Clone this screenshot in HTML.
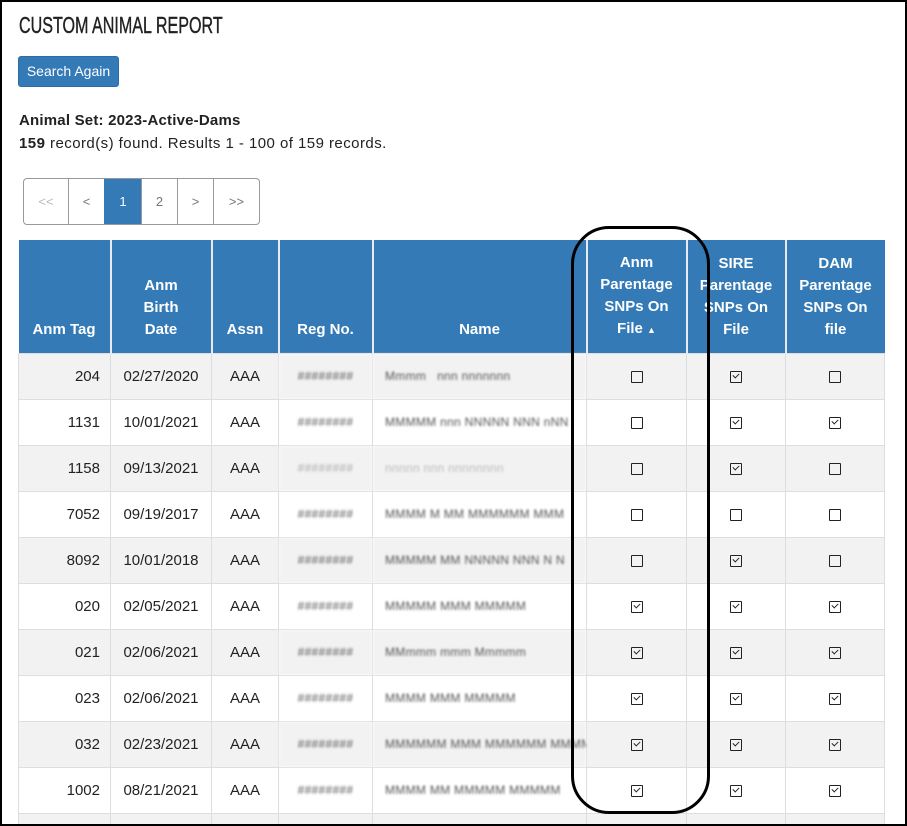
<!DOCTYPE html>
<html style="overflow:hidden"><head><style>
html,body{margin:0;width:907px;height:826px;overflow:hidden;}
body{position:relative;background:#fff;font-family:"Liberation Sans","DejaVu Sans",sans-serif;color:#222;}
.frame{position:absolute;left:0;top:0;width:903px;height:822px;border:2px solid #000;z-index:5;pointer-events:none}
h1{position:absolute;left:19px;top:12px;margin:0;font-weight:normal;font-size:23px;transform:scaleX(0.7);transform-origin:left;color:#222;-webkit-text-stroke:0.4px #222;}
.btn{position:absolute;left:18px;top:56px;width:101px;height:31px;background:#337ab7;border:1px solid #2e6da4;border-radius:3px;box-sizing:border-box;color:#fff;font-size:14px;line-height:29px;text-align:center;}
.set{position:absolute;left:19px;top:112px;font-size:15px;font-weight:bold;letter-spacing:0.2px}
.rec{position:absolute;left:19px;top:135px;font-size:15px;letter-spacing:0.45px}
.pag{position:absolute;left:23px;top:178px;height:45px;display:flex;border:1px solid #999;border-radius:4px;overflow:hidden;}
.pag div{height:45px;line-height:45px;text-align:center;border-left:1px solid #999;color:#777;font-size:13px;}
.pag div:first-child{border-left:none;color:#bbb}
.pag .a{background:#337ab7;color:#fff;border-color:#337ab7}
table{position:absolute;left:18px;top:240px;border-collapse:collapse;font-size:15px;table-layout:fixed;width:866px}
th{background:#337ab7;color:#fff;font-weight:bold;vertical-align:bottom;padding:0 0 12px;height:113px;border-left:2px solid #e9eaed;line-height:22px;text-align:center;box-sizing:border-box;font-size:15px}
th:first-child{border-left:none}
td{height:46px;border:1px solid #dcdee2;text-align:center;padding:0;box-sizing:border-box;white-space:nowrap;overflow:hidden}
tr:nth-child(even) td{background:#f2f2f2}
td.r{text-align:right;padding-right:10px}
.bl{filter:blur(1.1px);color:#555;font-size:12px;letter-spacing:0.3px}
td.n{text-align:left;padding-left:12px}
.cb{display:inline-block;width:10px;height:10px;border:1.5px solid #222;border-radius:1px;position:relative;vertical-align:middle}
.cb.c::after{content:"";position:absolute;left:2px;top:1px;width:5px;height:3px;border-left:1.5px solid #222;border-bottom:1.5px solid #222;transform:rotate(-45deg)}
.oval{position:absolute;left:571px;top:226px;width:133px;height:582px;border:3px solid #000;border-radius:38px;z-index:4}
</style></head><body>
<div class="frame"></div>
<h1>CUSTOM ANIMAL REPORT</h1>
<div class="btn">Search Again</div>
<div class="set">Animal Set: 2023-Active-Dams</div>
<div class="rec"><b>159</b> record(s) found. Results 1 - 100 of 159 records.</div>
<div class="pag"><div style="width:44px">&lt;&lt;</div><div style="width:35px">&lt;</div><div class="a" style="width:36px">1</div><div style="width:35px">2</div><div style="width:35px">&gt;</div><div style="width:45px">&gt;&gt;</div></div>
<table>
<colgroup><col style="width:92px"><col style="width:101px"><col style="width:67px"><col style="width:94px"><col style="width:214px"><col style="width:100px"><col style="width:99px"><col style="width:99px"></colgroup>
<tr><th>Anm Tag</th><th>Anm<br>Birth<br>Date</th><th>Assn</th><th>Reg No.</th><th>Name</th><th>Anm<br>Parentage<br>SNPs On<br>File <span style="font-size:9px">▲</span></th><th>SIRE<br>Parentage<br>SNPs On<br>File</th><th>DAM<br>Parentage<br>SNPs On<br>file</th></tr>
<tr><td class="r">204</td><td>02/27/2020</td><td>AAA</td><td class="bl">########</td><td class="n bl">Mmmm &nbsp; nnn nnnnnnn</td><td><span class="cb"></span></td><td><span class="cb c"></span></td><td><span class="cb"></span></td></tr>
<tr><td class="r">1131</td><td>10/01/2021</td><td>AAA</td><td class="bl">########</td><td class="n bl">MMMMM nnn NNNNN NNN nNN</td><td><span class="cb"></span></td><td><span class="cb c"></span></td><td><span class="cb c"></span></td></tr>
<tr><td class="r">1158</td><td>09/13/2021</td><td>AAA</td><td class="bl" style="color:#aaa">########</td><td class="n bl" style="color:#bbb">nnnnn nnn nnnnnnnn</td><td><span class="cb"></span></td><td><span class="cb c"></span></td><td><span class="cb"></span></td></tr>
<tr><td class="r">7052</td><td>09/19/2017</td><td>AAA</td><td class="bl">########</td><td class="n bl">MMMM M MM MMMMMM MMM</td><td><span class="cb"></span></td><td><span class="cb"></span></td><td><span class="cb"></span></td></tr>
<tr><td class="r">8092</td><td>10/01/2018</td><td>AAA</td><td class="bl">########</td><td class="n bl">MMMMM MM NNNNN NNN N N</td><td><span class="cb"></span></td><td><span class="cb c"></span></td><td><span class="cb"></span></td></tr>
<tr><td class="r">020</td><td>02/05/2021</td><td>AAA</td><td class="bl">########</td><td class="n bl">MMMMM MMM MMMMM</td><td><span class="cb c"></span></td><td><span class="cb c"></span></td><td><span class="cb c"></span></td></tr>
<tr><td class="r">021</td><td>02/06/2021</td><td>AAA</td><td class="bl">########</td><td class="n bl">MMmmm mmm Mmmmm</td><td><span class="cb c"></span></td><td><span class="cb c"></span></td><td><span class="cb c"></span></td></tr>
<tr><td class="r">023</td><td>02/06/2021</td><td>AAA</td><td class="bl">########</td><td class="n bl">MMMM MMM MMMMM</td><td><span class="cb c"></span></td><td><span class="cb c"></span></td><td><span class="cb c"></span></td></tr>
<tr><td class="r">032</td><td>02/23/2021</td><td>AAA</td><td class="bl">########</td><td class="n bl">MMMMMM MMM MMMMMM MMMM</td><td><span class="cb c"></span></td><td><span class="cb c"></span></td><td><span class="cb c"></span></td></tr>
<tr><td class="r">1002</td><td>08/21/2021</td><td>AAA</td><td class="bl">########</td><td class="n bl">MMMM MM MMMMM MMMMM</td><td><span class="cb c"></span></td><td><span class="cb c"></span></td><td><span class="cb c"></span></td></tr>
<tr><td></td><td></td><td></td><td></td><td></td><td></td><td></td><td></td></tr>
</table>
<div class="oval"></div>
</body></html>
